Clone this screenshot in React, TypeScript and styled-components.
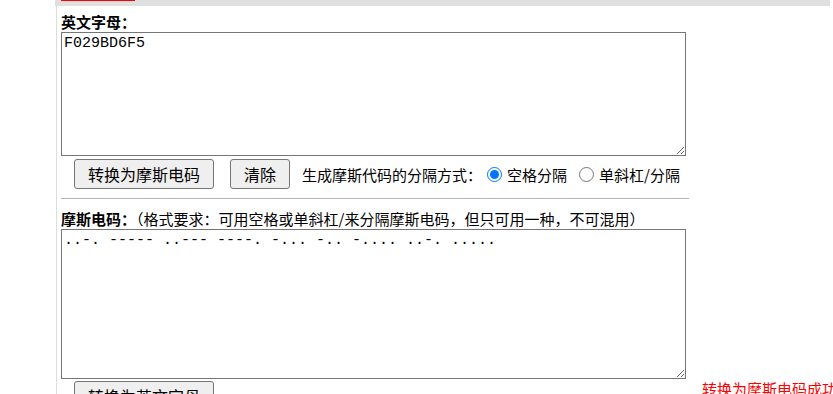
import React from 'react';
import styled, { createGlobalStyle } from 'styled-components';

const Global = createGlobalStyle`
  html, body { margin: 0; padding: 0; background: #fff; overflow: hidden; }
  body {
    font-family: "Noto Sans CJK SC", "Noto Sans", sans-serif;
    font-size: 15px;
    color: #000;
  }
`;

const Page = styled.div`
  margin-left: 55px;
  width: 775px;
`;

const TabBar = styled.div`
  height: 6px;
  background: #e0e0e0;
  display: flex;
  padding-left: 6px;
`;

const ActiveTab = styled.div`
  width: 74px;
  height: 1px;
  background: #ff0000;
`;

const Panel = styled.div`
  margin-left: 1px;
  border-left: 1px solid #dcdcdc;
  padding-left: 4px;
  min-height: 420px;
`;

const Label = styled.div<{ $gap?: number }>`
  line-height: 21px;
  padding-top: ${(p) => p.$gap ?? 5}px;
  white-space: nowrap;
`;

const Strong = styled.b`
  font-weight: bold;
`;

const TextBox = styled.textarea<{ $h: number }>`
  display: block;
  box-sizing: border-box;
  width: 625px;
  height: ${(p) => p.$h}px;
  margin: 0;
  border: 1px solid #767676;
  border-radius: 0;
  padding: 2px;
  font: 15px/17px "Liberation Mono", monospace;
  color: #000;
  background: #fff;
  outline: none;
  resize: both;
`;

const Row = styled.div<{ $top: number }>`
  display: flex;
  align-items: center;
  margin-top: ${(p) => p.$top}px;
  padding-left: 13px;
  height: 30px;
  white-space: nowrap;
`;

const Button = styled.button<{ $after?: number }>`
  box-sizing: border-box;
  height: 30px;
  padding: 0 13px;
  margin: 0 ${(p) => p.$after ?? 0}px 0 0;
  font-family: "Noto Sans CJK SC", "Noto Sans", sans-serif;
  font-size: 16px;
  color: #000;
  background: #efefef;
  border: 1px solid #767676;
  border-radius: 3px;
  flex: none;
`;

const Radio = styled.input`
  width: 15px;
  height: 15px;
  margin: 0 5px 0 5px;
  accent-color: #0075ff;
  flex: none;
`;

const RadioText = styled.span`
  margin-right: 7px;
`;

const Rule = styled.hr`
  width: 628px;
  margin: 9px 0 0 0;
  border: none;
  border-top: 1px solid #b4b4b4;
  height: 0;
`;

const Message = styled.span`
  color: #ff0000;
  margin-left: 488px;
  align-self: flex-start;
  margin-top: -3px;
  line-height: 21px;
`;

export default function App() {
  return (
    <>
      <Global />
      <Page>
        <TabBar>
          <ActiveTab />
        </TabBar>
        <Panel>
          <Label>
            <Strong>英文字母：</Strong>
          </Label>
          <TextBox $h={124} defaultValue="F029BD6F5" spellCheck={false} />
          <Row $top={3}>
            <Button $after={16}>转换为摩斯电码</Button>
            <Button $after={12}>清除</Button>
            <span>生成摩斯代码的分隔方式：</span>
            <Radio type="radio" name="sep" defaultChecked />
            <RadioText>空格分隔</RadioText>
            <Radio type="radio" name="sep" />
            <span>单斜杠/分隔</span>
          </Row>
          <Rule />
          <Label $gap={9}>
            <Strong>摩斯电码：</Strong>（格式要求：可用空格或单斜杠/来分隔摩斯电码，但只可用一种，不可混用）
          </Label>
          <TextBox
            $h={150}
            defaultValue="..-. ----- ..--- ----. -... -.. -.... ..-. ....."
            spellCheck={false}
          />
          <Row $top={2}>
            <Button>转换为英文字母</Button>
            <Message>转换为摩斯电码成功</Message>
          </Row>
        </Panel>
      </Page>
    </>
  );
}
